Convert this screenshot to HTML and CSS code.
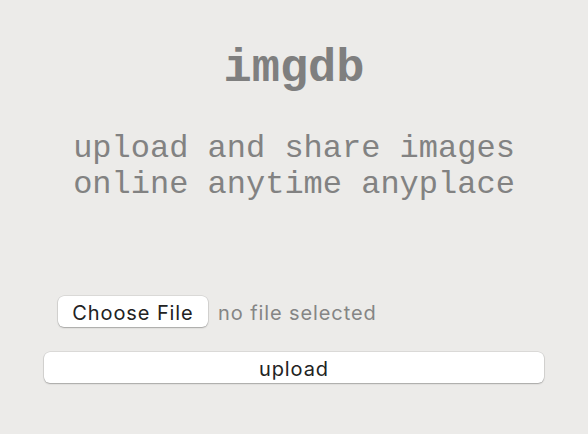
FILE: index.html
```html
<!DOCTYPE html>
<html lang="en">
<head>
<meta charset="utf-8">
<title>imgdb</title>
<link rel="stylesheet" href="styles.css">
</head>
<body>
<main class="page">
  <h1 class="title">imgdb</h1>
  <p class="tagline">upload and share images<br>online anytime anyplace</p>
  <form class="upload-form">
    <div class="file-row">
      <button type="button" class="btn file-btn">Choose File</button>
      <span class="file-status">no file selected</span>
    </div>
    <button type="button" class="btn submit-btn">upload</button>
  </form>
</main>
</body>
</html>
```
FILE: styles.css
```css
html, body {
  margin: 0;
  padding: 0;
  background: #ecebe9;
}
body {
  width: 588px;
  height: 434px;
  overflow: hidden;
}
.page {
  display: flex;
  flex-direction: column;
  align-items: center;
}
.title {
  margin: 45px 0 0;
  font-family: "Liberation Mono", "Courier New", monospace;
  font-weight: bold;
  font-size: 47px;
  line-height: 48px;
  color: #7f7f7f;
  text-align: center;
}
.tagline {
  margin: 38px 0 0;
  font-family: "Liberation Mono", "Courier New", monospace;
  font-size: 32px;
  line-height: 36px;
  color: #828282;
  text-align: center;
}
.upload-form {
  margin-top: 93px;
  width: 500px;
  display: flex;
  flex-direction: column;
  gap: 25px;
}
.file-row {
  display: flex;
  align-items: center;
  gap: 10px;
  padding-left: 14px;
}
.btn {
  font-family: "Inter", "Liberation Sans", sans-serif;
  font-size: 20px;
  letter-spacing: 0.9px;
  color: #222222;
  background: #ffffff;
  border: none;
  border-radius: 6px;
  box-shadow: 0 0 0 0.5px rgba(0,0,0,0.14), 0 1px 1.5px rgba(0,0,0,0.24);
  height: 31px;
  padding: 3px 14px 0;
  line-height: 28px;
  margin: 0;
}
.file-btn {
  width: 150px;
  padding: 3px 0 0;
}
.file-status {
  font-family: "Inter", "Liberation Sans", sans-serif;
  font-size: 20px;
  letter-spacing: 0.9px;
  color: #858585;
  padding-top: 2px;
}
.submit-btn {
  width: 500px;
}
```
